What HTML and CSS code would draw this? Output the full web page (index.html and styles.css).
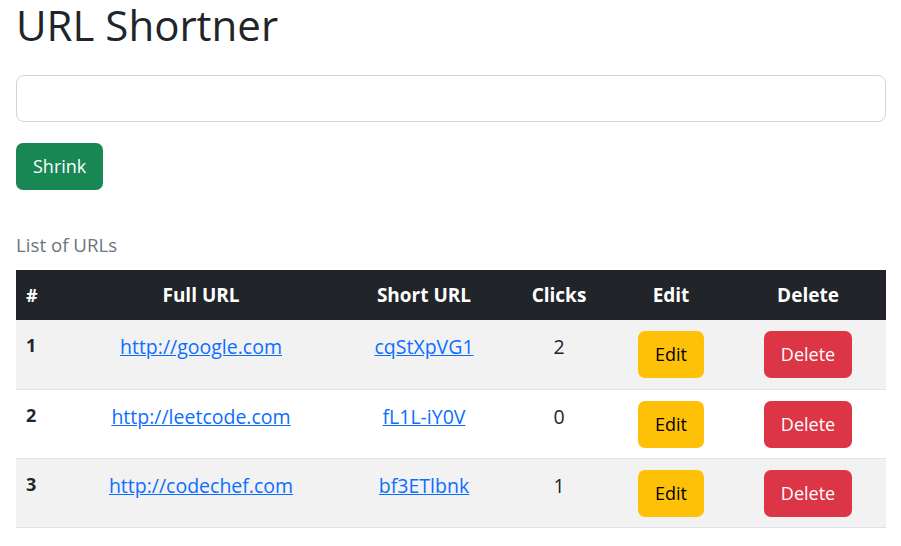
FILE: index.html
```html
<!DOCTYPE html>
<html lang="en">
<head>
<meta charset="utf-8">
<title>URL Shortner</title>
<link rel="stylesheet" href="styles.css">
</head>
<body>
<div class="page">
  <h1 class="title">URL Shortner</h1>
  <form class="shrink-form">
    <input class="url-input" type="url" aria-label="Full URL">
    <button class="btn btn-success" type="button">Shrink</button>
  </form>
  <table class="url-table">
    <caption class="url-caption">List of URLs</caption>
    <colgroup>
      <col class="c-num"><col class="c-full"><col class="c-short"><col class="c-clicks"><col class="c-edit"><col class="c-del">
    </colgroup>
    <thead>
      <tr>
        <th class="num">#</th>
        <th>Full URL</th>
        <th>Short URL</th>
        <th>Clicks</th>
        <th>Edit</th>
        <th>Delete</th>
      </tr>
    </thead>
    <tbody>
      <tr class="striped">
        <td class="num">1</td>
        <td><a href="#">http://google.com</a></td>
        <td><a href="#">cqStXpVG1</a></td>
        <td>2</td>
        <td><button class="btn btn-warning" type="button">Edit</button></td>
        <td><button class="btn btn-danger" type="button">Delete</button></td>
      </tr>
      <tr>
        <td class="num">2</td>
        <td><a href="#">http://leetcode.com</a></td>
        <td><a href="#">fL1L-iY0V</a></td>
        <td>0</td>
        <td><button class="btn btn-warning" type="button">Edit</button></td>
        <td><button class="btn btn-danger" type="button">Delete</button></td>
      </tr>
      <tr class="striped">
        <td class="num">3</td>
        <td><a href="#">http://codechef.com</a></td>
        <td><a href="#">bf3ETlbnk</a></td>
        <td>1</td>
        <td><button class="btn btn-warning" type="button">Edit</button></td>
        <td><button class="btn btn-danger" type="button">Delete</button></td>
      </tr>
    </tbody>
  </table>
</div>
</body>
</html>
```

FILE: styles.css
```css
* { box-sizing: border-box; }
body {
  margin: 0;
  background: #fff;
  color: #212529;
  font-family: "Open Sans", "Noto Sans", sans-serif;
  font-size: 18px;
}
.page { padding: 0 15px 0 16px; }
.title {
  margin: 0;
  padding-top: 2px;
  font-size: 42px;
  line-height: 46px;
  font-weight: 500;
  color: #212529;
}
.shrink-form {
  display: flex;
  flex-direction: column;
  align-items: flex-start;
  margin-top: 27px;
  gap: 21px;
}
.url-input {
  display: block;
  width: 100%;
  height: 47px;
  border: 1px solid #ced4da;
  border-radius: 8px;
  padding: 8px 16px;
  font: inherit;
}
.btn {
  display: inline-block;
  height: 47px;
  padding: 0 16px;
  border: 1px solid transparent;
  border-radius: 7px;
  font-family: inherit;
  font-size: 18px;
  line-height: 45px;
  cursor: pointer;
}
.btn-success { background: #198754; color: #fff; }
.btn-warning { background: #ffc107; color: #000; }
.btn-danger { background: #dc3545; color: #fff; }
.url-table {
  width: 100%;
  margin-top: 34px;
  border-collapse: collapse;
  table-layout: fixed;
  caption-side: top;
  font-size: 19.5px;
}
.url-caption {
  text-align: left;
  color: #6c757d;
  padding: 6px 0 10px;
  line-height: 30px;
  font-size: 18.7px;
}
.c-num { width: 44px; }
.c-full { width: 282px; }
.c-short { width: 164px; }
.c-clicks { width: 106px; }
.c-edit { width: 118px; }
.c-del { width: 156px; }
.url-table th {
  background: #212529;
  color: #fff;
  font-weight: 700;
  font-size: 19px;
  line-height: 30px;
  padding: 10px 8px;
  text-align: center;
}
.url-table tbody tr { height: 69px; }
.url-table td {
  padding: 10px 8px 10px;
  text-align: center;
  vertical-align: top;
  line-height: 30px;
  border-bottom: 1px solid #dee2e6;
}
.url-table td .btn { vertical-align: top; margin-top: 1px; }
.url-table .num { text-align: left; padding-left: 10px; font-weight: 700; font-size: 18px; }
.url-table td:not(.num):not(:has(.btn)) { padding-top: 12px; }
.striped td { background: #f2f2f2; }
.url-table a { color: #0d6efd; text-decoration: underline; }
```
